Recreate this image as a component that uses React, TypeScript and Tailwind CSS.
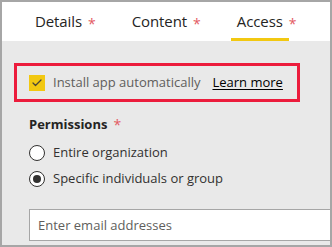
import { Check } from 'lucide-react';

const font = { fontFamily: '"Open Sans", "Noto Sans", sans-serif' };

function Star() {
  return <span className="text-[#e35a63] text-[14px] font-normal">*</span>;
}

function Tab({ label, active }: { label: string; active?: boolean }) {
  return (
    <div className="flex items-center h-full whitespace-nowrap">
      <div
        className={
          'h-full flex items-center px-[6px] border-b-[3px] ' +
          (active ? 'border-[#f2c811]' : 'border-transparent')
        }
      >
        <span className="text-[15px] tracking-[-0.1px] text-[#252423] pt-[3px]">{label}</span>
      </div>
      <span className="pt-[3px]">
        <Star />
      </span>
    </div>
  );
}

function Radio({ label, checked }: { label: string; checked?: boolean }) {
  return (
    <div className="flex items-center gap-[8px] h-[26px] whitespace-nowrap">
      <div className="w-[16px] h-[16px] rounded-full border border-[#323130] bg-white flex items-center justify-center">
        {checked && <div className="w-[8px] h-[8px] rounded-full bg-[#323130]" />}
      </div>
      <span className="text-[13px] text-[#323130]">{label}</span>
    </div>
  );
}

export default function App() {
  return (
    <div
      className="w-[332px] h-[247px] border-2 border-[#a6a6a6] bg-[#e9e9e9] overflow-hidden flex flex-col"
      style={font}
    >
      {/* tabs */}
      <div className="h-[39px] bg-white flex items-stretch pl-[27px] gap-[30px] shrink-0">
        <Tab label="Details" />
        <Tab label="Content" />
        <Tab label="Access" active />
      </div>

      <div className="flex flex-col pt-[22px]">
        {/* highlighted option */}
        <div className="ml-[12px] w-[286px] h-[39px] border-[3px] border-[#ec1c3c] flex items-center pl-[12px] gap-[8px] whitespace-nowrap">
          <div className="w-[16px] h-[16px] bg-[#f2c811] flex items-center justify-center">
            <Check className="w-[12px] h-[12px] text-[#4a4538]" strokeWidth={2.5} />
          </div>
          <span className="text-[13px] text-[#605e5c]">Install app automatically</span>
          <a href="#" className="ml-[4px] text-[13px] text-black underline underline-offset-2">
            Learn more
          </a>
        </div>

        <div className="pl-[27px] pt-[12px] flex flex-col">
          <div className="text-[13px] font-bold text-[#252423] flex items-center gap-[6px]">
            Permissions <Star />
          </div>
          <div className="mt-[5px] flex flex-col">
            <Radio label="Entire organization" />
            <Radio label="Specific individuals or group" checked />
          </div>
          <input
            placeholder="Enter email addresses"
            className="mt-[17px] w-[320px] h-[32px] bg-white border border-[#a6a6a6] px-[8px] text-[13px] placeholder:text-[#605e5c] outline-none"
          />
        </div>
      </div>
    </div>
  );
}
